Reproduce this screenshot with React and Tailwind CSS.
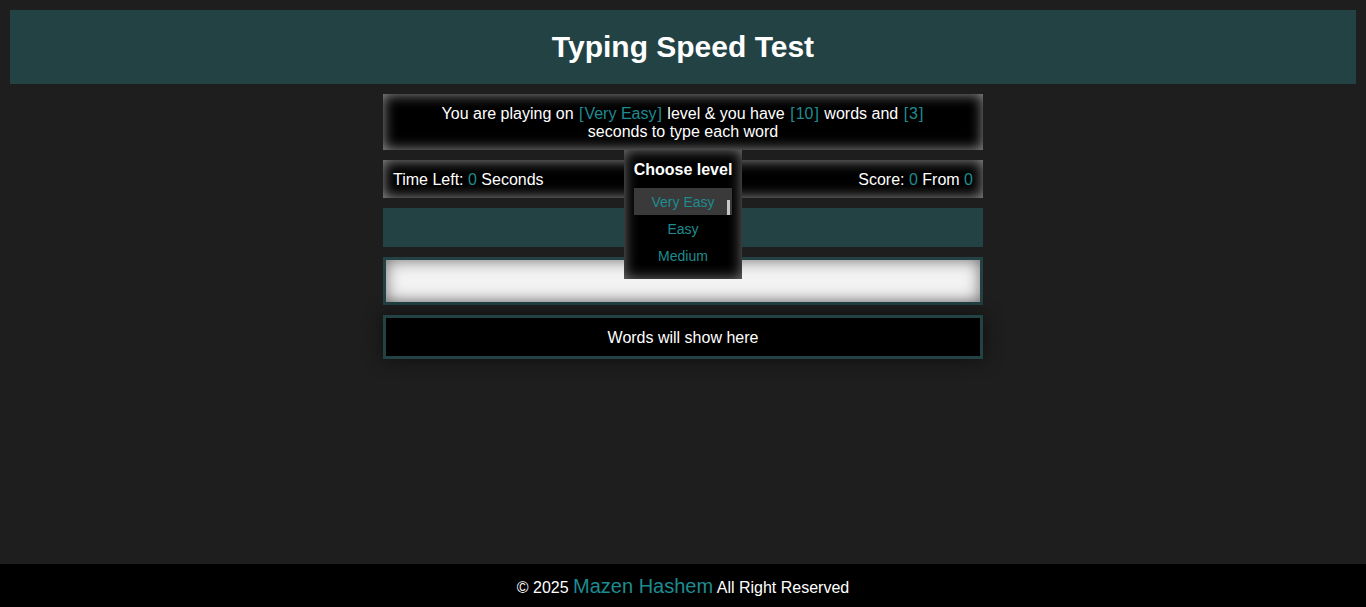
import React from 'react';

function Hl({ children }) {
  return (
    <span className="text-[#1d8c90]">
      <span className="px-[1px]">[</span>
      {children}
      <span className="px-[1px]">]</span>
    </span>
  );
}

export default function App() {
  const levels = ['Very Easy', 'Easy', 'Medium'];

  return (
    <div className="min-h-screen flex flex-col bg-[#1e1e1e] text-white font-['Liberation_Sans',Arial,sans-serif]">
      {/* Header */}
      <div className="m-[10px] mb-0 h-[74px] bg-[#224244] flex items-center justify-center">
        <h1 className="text-[30px] font-bold leading-[34px] mt-[-1px]">Typing Speed Test</h1>
      </div>

      {/* Game */}
      <div className="relative w-[600px] mx-auto mt-[10px] flex flex-col gap-[10px]">
        <div className="h-[56px] bg-black shadow-[inset_0_0_14px_#9a9a9a] flex items-center justify-center text-center text-[16px] leading-[18px] px-4 pt-[2px]">
          <p>
            You are playing on <Hl>Very Easy</Hl> level &amp; you have <Hl>10</Hl> words and <Hl>3</Hl>
            <br />
            seconds to type each word
          </p>
        </div>

        <div className="h-[38px] bg-black shadow-[inset_0_0_14px_#9a9a9a] flex items-center justify-between px-[10px] text-[16px] pt-[2px]">
          <span>
            Time Left: <span className="text-[#1d8c90]">0</span> Seconds
          </span>
          <span>
            Score: <span className="text-[#1d8c90]">0</span> From <span className="text-[#1d8c90]">0</span>
          </span>
        </div>

        <div className="h-[39px] bg-[#224244]"></div>

        <div className="h-[48px] border-[3px] border-[#224244] bg-[#f3f3f3] shadow-[inset_0_0_16px_#6a6a6a]"></div>

        <div className="h-[44px] border-[3px] border-[#224244] bg-black flex items-center justify-center text-[16px] pt-[2px] shadow-[0_0_18px_#0f0f0f]">
          Words will show here
        </div>

        {/* Level popup */}
        <div className="absolute left-[241px] top-[56px] w-[118px] h-[129px] bg-black shadow-[inset_0_0_14px_#7a7a7a] flex flex-col items-center pt-[10px]">
          <div className="text-[16px] font-bold leading-[20px]">Choose level</div>
          <div className="relative mt-[8px] w-[98px] flex flex-col text-[14px] text-[#1d8c90]">
            {levels.map((l, i) => (
              <div
                key={l}
                className={`h-[27px] flex items-center justify-center pt-[2px] ${i === 0 ? 'bg-[#3a3a3a]' : ''}`}
              >
                {l}
              </div>
            ))}
            <div className="absolute right-[2px] top-[12px] w-[3px] h-[15px] bg-[#c8c8c8]"></div>
          </div>
        </div>
      </div>

      <div className="flex-1"></div>

      {/* Footer */}
      <div className="h-[43px] bg-black flex items-center justify-center text-[16px]">
        <span>
          © 2025 <span className="text-[20px] text-[#1d8c90]">Mazen Hashem</span> All Right Reserved
        </span>
      </div>
    </div>
  );
}
